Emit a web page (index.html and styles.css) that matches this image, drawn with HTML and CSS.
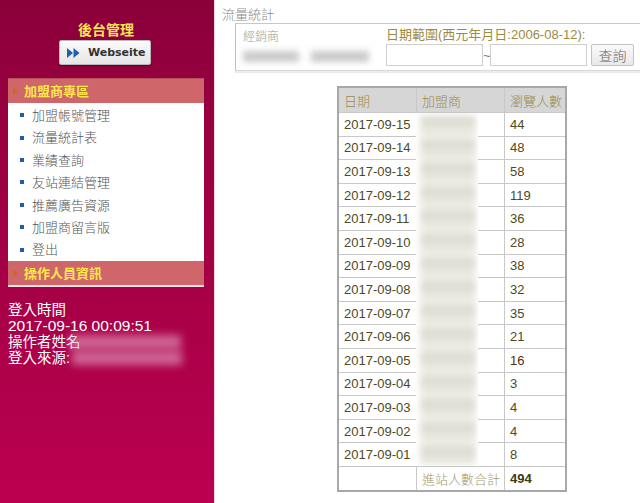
FILE: index.html
```html
<!DOCTYPE html>
<html lang="zh-Hant">
<head>
<meta charset="utf-8">
<title>流量統計</title>
<link rel="stylesheet" href="styles.css">
</head>
<body>
<div class="page">
  <aside class="sidebar">
    <div class="brand">後台管理</div>
    <div class="btn-wrap">
      <button class="web-btn" type="button">
        <svg class="web-ico" width="13" height="10" viewBox="0 0 13 10"><polygon points="0,0 6,5 0,10" fill="#1d5fb0"/><polygon points="6.5,0 12.5,5 6.5,10" fill="#1d5fb0"/></svg>
        <span>Webseite</span>
      </button>
    </div>
    <div class="menu">
      <div class="menu-head"><span class="tri"></span>加盟商專區</div>
      <ul class="menu-list">
        <li>加盟帳號管理</li>
        <li>流量統計表</li>
        <li>業績查詢</li>
        <li>友站連結管理</li>
        <li>推薦廣告資源</li>
        <li>加盟商留言版</li>
        <li>登出</li>
      </ul>
      <div class="menu-head"><span class="tri"></span>操作人員資訊</div>
    </div>
    <div class="login">
      <div>登入時間</div>
      <div class="ltime">2017-09-16 00:09:51</div>
      <div class="blurline">操作者姓名<span class="smudge s1"></span></div>
      <div class="blurline">登入來源:<span class="smudge s2"></span></div>
    </div>
  </aside>
  <main class="main">
    <div class="page-title">流量統計</div>
    <div class="filter">
      <div class="f-col1">
        <div class="f-label">經銷商</div>
        <div class="f-blur"><span class="bb b1"></span><span class="bb b2"></span></div>
      </div>
      <div class="f-col2">
        <div class="f-label2">日期範圍(西元年月日:2006-08-12):</div>
        <div class="f-row">
          <input class="date-in" type="text"><span class="tilde">~</span><input class="date-in" type="text"><button class="q-btn" type="button">查詢</button>
        </div>
      </div>
    </div>
    <div class="table-wrap">
      <table class="stats">
        <thead>
          <tr><th class="c1">日期</th><th class="c2">加盟商</th><th class="c3">瀏覽人數</th></tr>
        </thead>
        <tbody>
          <tr><td>2017-09-15</td><td></td><td>44</td></tr>
          <tr><td>2017-09-14</td><td></td><td>48</td></tr>
          <tr><td>2017-09-13</td><td></td><td>58</td></tr>
          <tr><td>2017-09-12</td><td></td><td>119</td></tr>
          <tr><td>2017-09-11</td><td></td><td>36</td></tr>
          <tr><td>2017-09-10</td><td></td><td>28</td></tr>
          <tr><td>2017-09-09</td><td></td><td>38</td></tr>
          <tr><td>2017-09-08</td><td></td><td>32</td></tr>
          <tr><td>2017-09-07</td><td></td><td>35</td></tr>
          <tr><td>2017-09-06</td><td></td><td>21</td></tr>
          <tr><td>2017-09-05</td><td></td><td class="red">16</td></tr>
          <tr><td>2017-09-04</td><td></td><td>3</td></tr>
          <tr><td>2017-09-03</td><td></td><td>4</td></tr>
          <tr><td>2017-09-02</td><td></td><td>4</td></tr>
          <tr><td>2017-09-01</td><td></td><td>8</td></tr>
          <tr class="total"><td></td><td class="tl">進站人數合計</td><td class="tv">494</td></tr>
        </tbody>
      </table>
      <div class="mask"><div class="mask-blur"></div></div>
    </div>
  </main>
</div>
</body>
</html>
```

FILE: styles.css
```css
html, body {
  margin: 0;
  padding: 0;
  background: #fff;
}
body {
  font-family: "Liberation Sans", "Noto Sans CJK TC", Arial, sans-serif;
  font-size: 13px;
  color: #333;
  overflow: hidden;
}
.page {
  display: flex;
  width: 640px;
  height: 503px;
  overflow: hidden;
}
.sidebar {
  width: 215px;
  flex: 0 0 215px;
  height: 503px;
  background: linear-gradient(#8c003a 0%, #a30045 50%, #bc0050 100%);
  border-right: 1px solid #f2d6e0;
  box-sizing: border-box;
}
.brand {
  padding-top: 20px;
  height: 18px;
  line-height: 18px;
  text-align: center;
  font-family: "Noto Sans CJK TC", sans-serif;
  font-weight: bold;
  font-size: 14px;
  color: #f7e553;
  padding-right: 2px;
}
.btn-wrap {
  display: flex;
  justify-content: flex-start;
  padding-left: 59px;
  margin-top: 2px;
}
.web-btn {
  width: 92px;
  height: 25px;
  display: flex;
  align-items: center;
  gap: 8px;
  padding: 0 0 0 7px;
  background: linear-gradient(#fafafa, #e6e6e6);
  border: 1px solid #b9b9b9;
  border-radius: 2px;
  box-shadow: 0 1px 1px rgba(0,0,0,0.35);
  font-family: "DejaVu Sans", Verdana, sans-serif;
  font-weight: bold;
  font-size: 11px;
  color: #333;
}
.web-ico { flex: none; }
.menu {
  margin: 13px 0 0 8px;
  width: 196px;
  background: #fff;
  border-bottom: 2px solid #e9e0e4;
}
.menu-head {
  height: 24px;
  line-height: 24px;
  background: #cf6669;
  color: #fbe94a;
  font-family: "Noto Sans CJK TC", sans-serif;
  font-weight: bold;
  font-size: 13px;
  display: flex;
  align-items: center;
  padding-left: 5px;
}
.menu-head:first-child {
  border-top: 1px solid #b8505a;
}
.tri {
  width: 0;
  height: 0;
  border-top: 4px solid transparent;
  border-bottom: 4px solid transparent;
  border-left: 5px solid #d4661a;
  margin-right: 6px;
}
.menu-list {
  list-style: none;
  margin: 0;
  padding: 1px 0 0 12px;
}
.menu-list li {
  height: 22.4px;
  line-height: 22.4px;
  font-family: "Noto Sans CJK TC", sans-serif;
  font-weight: 300;
  font-size: 13px;
  color: #555;
  display: flex;
  align-items: center;
}
.menu-list li::before {
  content: "";
  width: 4px;
  height: 4px;
  background: #1f5fa8;
  margin-right: 8px;
  flex: none;
}
.login {
  margin: 15px 0 0 8px;
  color: #fff;
  font-size: 14.5px;
  line-height: 16px;
  font-family: "Liberation Sans", "Noto Sans CJK TC", sans-serif;
}
.ltime {
  font-size: 15.5px;
}
.blurline {
  display: flex;
  align-items: center;
}
.smudge {
  display: inline-block;
  height: 14px;
  background: rgba(230, 170, 200, 0.6);
  filter: blur(4px);
}
.s1 { width: 112px; margin-left: -12px; }
.s2 { width: 110px; margin-left: 2px; }

.main {
  flex: 1;
  padding: 6px 0 0 7px;
  overflow: hidden;
}
.page-title {
  line-height: 16px;
  height: 16px;
  color: #8a8a8a;
  font-family: "Noto Sans CJK TC", sans-serif;
  font-weight: 300;
  font-size: 13px;
}
.filter {
  margin: 1px 0 0 13px;
  width: 430px;
  height: 48px;
  box-sizing: border-box;
  border-top: 1px solid #c8c8c8;
  border-left: 1px solid #c0c0c0;
  border-bottom: 1px solid #d8d8d8;
  box-shadow: 0 2px 1px #ececec;
  display: flex;
  padding: 2px 0 0 7px;
}
.f-col1 {
  width: 143px;
  flex: none;
}
.f-label {
  line-height: 20px;
  color: #a0a090;
  font-family: "Noto Sans CJK TC", sans-serif;
  font-weight: 300;
  font-size: 12px;
}
.f-blur {
  display: flex;
  gap: 12px;
  padding-top: 5px;
}
.bb {
  display: block;
  height: 11px;
  background: #cacaca;
  filter: blur(3px);
}
.b1 { width: 56px; }
.b2 { width: 58px; }
.f-label2 {
  line-height: 18px;
  color: #9c8a3e;
  font-size: 13px;
  font-family: "Liberation Sans", "Noto Sans CJK TC", sans-serif;
}
.f-row {
  display: flex;
  align-items: center;
  height: 22px;
}
.date-in {
  width: 97px;
  height: 22px;
  box-sizing: border-box;
  border: 1px solid #cfcfcf;
  margin: 0;
  padding: 0;
  background: #fff;
}
.tilde {
  width: 7px;
  color: #777;
  font-size: 13px;
  text-align: center;
}
.q-btn {
  margin-left: 4px;
  width: 43px;
  height: 22px;
  padding: 0;
  border: 1px solid #c2c2c2;
  border-radius: 2px;
  background: linear-gradient(#fafafa, #e8e8e8);
  font-family: "Noto Sans CJK TC", sans-serif;
  font-weight: 300;
  font-size: 14px;
  color: #666;
}
.table-wrap {
  position: relative;
  margin: 15px 0 0 115px;
  width: 226px;
}
.stats {
  border-collapse: collapse;
  width: 226px;
  border: 2px solid #a8a8a8;
  table-layout: fixed;
}
.stats th, .stats td {
  border: 1px solid #c8c8c8;
  padding: 0 0 0 5px;
  text-align: left;
  font-size: 13px;
  white-space: nowrap;
  overflow: hidden;
}
.stats th {
  background: #d6d6d6;
  height: 24px;
  color: #9a8b4e;
  font-family: "Noto Sans CJK TC", sans-serif;
  font-weight: 300;
}
.c1 { width: 72px; }
.c2 { width: 82px; }
.c3 { width: 55px; }
.stats td {
  height: 22.6px;
  color: #4d4a1e;
  font-family: "Liberation Sans", sans-serif;
}
.stats td.red { color: #5e2b12; }
.stats .total td { height: 23px; }
.stats td.tl {
  color: #a39a6e;
  font-family: "Noto Sans CJK TC", sans-serif;
  font-weight: 300;
}
.stats td.tv {
  font-weight: bold;
  color: #3e3a10;
}
.mask {
  position: absolute;
  left: 79px;
  top: 27px;
  width: 62px;
  height: 353px;
  background: #fff;
  overflow: hidden;
}
.mask-blur {
  position: absolute;
  left: 4px;
  top: 2px;
  width: 56px;
  height: 350px;
  background: repeating-linear-gradient(#e6e5dc 0px, #dcdbd0 6px, #e6e5dc 12px, #f1f0ea 23.6px);
  filter: blur(3px);
}
```
